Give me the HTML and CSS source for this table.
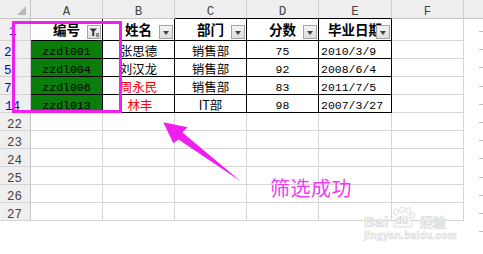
FILE: index.html
```html
<!DOCTYPE html>
<html lang="zh-CN">
<head>
<meta charset="utf-8">
<title>筛选成功</title>
<link rel="stylesheet" href="styles.css">
</head>
<body>
<div class="sheet">
  <div class="grid">
    <div class="corner"><svg class="tri" width="10" height="10" viewBox="0 0 10 10"><polygon points="0,9 9,0 9,9" fill="#b9b9b9"/></svg></div>
    <div class="ch">A</div>
    <div class="ch">B</div>
    <div class="ch tt">C</div>
    <div class="ch tt">D</div>
    <div class="ch tt">E</div>
    <div class="ch">F</div>

    <div class="rh r1 blue one">1</div>
    <div class="hd tb">编号<span class="fbtn"><svg width="12" height="12" viewBox="0 0 12 12"><polygon points="1.5,2.5 9,2.5 6.2,5.6 6.2,10 4.3,10 4.3,5.6" fill="#333"/><rect x="8" y="7.5" width="3" height="1" fill="#333"/><rect x="8" y="9.5" width="3" height="1" fill="#333"/></svg></span></div>
    <div class="hd tb">姓名<span class="fbtn"><i class="dn"></i></span></div>
    <div class="hd tb">部门<span class="fbtn"><i class="dn"></i></span></div>
    <div class="hd tb">分数<span class="fbtn"><i class="dn"></i></span></div>
    <div class="hd tb">毕业日期<span class="fbtn"><i class="dn"></i></span></div>
    <div class="c"></div>

    <div class="rh blue one">2</div>
    <div class="c tb code">zzdl001</div>
    <div class="c tb cjk">张思德</div>
    <div class="c tb cjk">销售部</div>
    <div class="c tb num">75</div>
    <div class="c tb date">2010/3/9</div>
    <div class="c"></div>

    <div class="rh blue one">5</div>
    <div class="c tb code">zzdl004</div>
    <div class="c tb cjk">刘汉龙</div>
    <div class="c tb cjk">销售部</div>
    <div class="c tb num">92</div>
    <div class="c tb date">2008/6/4</div>
    <div class="c"></div>

    <div class="rh blue one">7</div>
    <div class="c tb code">zzdl006</div>
    <div class="c tb cjk red">周永民</div>
    <div class="c tb cjk">销售部</div>
    <div class="c tb num">83</div>
    <div class="c tb date">2011/7/5</div>
    <div class="c"></div>

    <div class="rh blue">14</div>
    <div class="c tb code">zzdl013</div>
    <div class="c tb cjk red">&nbsp;林丰</div>
    <div class="c tb cjk">IT部</div>
    <div class="c tb num">98</div>
    <div class="c tb date">2007/3/27</div>
    <div class="c"></div>

    <div class="rh">22</div><div class="c"></div><div class="c"></div><div class="c"></div><div class="c"></div><div class="c"></div><div class="c"></div>
    <div class="rh">23</div><div class="c"></div><div class="c"></div><div class="c"></div><div class="c"></div><div class="c"></div><div class="c"></div>
    <div class="rh">24</div><div class="c"></div><div class="c"></div><div class="c"></div><div class="c"></div><div class="c"></div><div class="c"></div>
    <div class="rh">25</div><div class="c"></div><div class="c"></div><div class="c"></div><div class="c"></div><div class="c"></div><div class="c"></div>
    <div class="rh">26</div><div class="c"></div><div class="c"></div><div class="c"></div><div class="c"></div><div class="c"></div><div class="c"></div>
    <div class="rh">27</div><div class="c"></div><div class="c"></div><div class="c"></div><div class="c"></div><div class="c"></div><div class="c"></div>
  </div>
  <div class="edge">
    <div class="edge-head"></div>
    <div class="ticks"></div>
  </div>
</div>

<div class="hl-box"></div>
<svg class="arrow" width="483" height="254" viewBox="0 0 483 254">
  <polygon points="163.3,122.3 187.7,127.3 182.5,132.5 241,181.5 178.5,139.5 173.3,143.3" fill="#f01ff0"/>
</svg>
<div class="note">筛选成功</div>

<div class="wm">
  <div class="wm-top">
    <span class="wm-bai">Bai</span>
    <span class="wm-paw"><svg width="26" height="22" viewBox="0 0 26 22"><g fill="#fafafa" stroke="#d9d9d9" stroke-width="0.8"><ellipse cx="6" cy="5" rx="2.6" ry="3.2"/><ellipse cx="12" cy="2.8" rx="2.6" ry="2.6"/><ellipse cx="18.5" cy="3.5" rx="2.6" ry="3"/><ellipse cx="22.5" cy="8.5" rx="2.4" ry="2.8"/><path d="M4 20 C3 14 8 9 13 9 C18 9 23 14 22 20 Z"/></g></svg><span class="wm-du">du</span></span>
    <span class="wm-jy">经验</span>
  </div>
  <div class="wm-url">jingyan.baidu.com</div>
</div>
</body>
</html>
```
FILE: styles.css
```css
html, body {
  margin: 0;
  padding: 0;
}
body {
  width: 483px;
  height: 254px;
  overflow: hidden;
  background: #ffffff;
  position: relative;
  font-family: "Noto Sans CJK SC", "Liberation Sans", sans-serif;
}

.sheet {
  display: flex;
  align-items: flex-start;
}

.grid {
  display: grid;
  grid-template-columns: 31px 72px 72px 72px 72px 73px 72px;
  grid-template-rows: 19px 22px repeat(10, 18px);
}

.grid > div {
  box-sizing: border-box;
  border-right: 1px solid #d4d4d4;
  border-bottom: 1px solid #d4d4d4;
  position: relative;
  white-space: nowrap;
  line-height: 14px;
}

.corner {
  background: #efefef;
  border-right-color: #c4c4c4 !important;
  border-bottom-color: #c4c4c4 !important;
}
.tri {
  position: absolute;
  left: 17px;
  top: 6px;
}

.ch {
  background: #efefef;
  border-bottom-color: #c4c4c4 !important;
  border-right-color: #d0d0d0 !important;
  text-align: center;
  font-family: "Liberation Mono", monospace;
  font-size: 12.5px;
  color: #444444;
  padding-top: 5px;
}
.ch.tt {
  border-bottom-color: #000000 !important;
}

.rh {
  background: #efefef;
  border-right-color: #c4c4c4 !important;
  font-family: "Liberation Mono", monospace;
  font-size: 12.5px;
  color: #444444;
  padding-top: 4.5px;
  padding-left: 7px;
}
.rh.blue {
  color: #0000ee;
  padding-left: 5px;
}
.rh.one {
  padding-left: 4px;
}
.rh.r1 {
  padding-top: 6px;
  padding-left: 9px;
}

.tb {
  border-right-color: #000000 !important;
  border-bottom-color: #000000 !important;
}

.hd {
  text-align: center;
  font-weight: 700;
  font-size: 13.5px;
  color: #000000;
  padding-top: 2.5px;
}

.fbtn {
  position: absolute;
  right: 1px;
  bottom: 1px;
  width: 14px;
  height: 14px;
  box-sizing: border-box;
  border: 1px solid #a3a3a3;
  background: linear-gradient(#f3f3f3, #dedede);
  display: flex;
  align-items: center;
  justify-content: center;
}
.dn {
  width: 0;
  height: 0;
  border-left: 3.5px solid transparent;
  border-right: 3.5px solid transparent;
  border-top: 4px solid #444444;
  margin-top: 1px;
}

.c {
  color: #000000;
}
.code {
  background: #0a7d0a;
  text-align: center;
  font-family: "Liberation Mono", monospace;
  font-size: 11.5px;
  padding-top: 3.5px;
}
.cjk {
  text-align: center;
  font-size: 12.5px;
  padding-top: 2.5px;
}
.red {
  color: #ff0000;
}
.num {
  text-align: center;
  font-family: "Liberation Mono", monospace;
  font-size: 11.5px;
  padding-top: 3.5px;
}
.date {
  text-align: left;
  font-family: "Liberation Mono", monospace;
  font-size: 11.5px;
  padding-top: 3.5px;
  padding-left: 2px;
}

.edge {
  width: 20px;
  display: flex;
  flex-direction: column;
  align-items: flex-end;
}
.edge-head {
  width: 20px;
  height: 18px;
  background: #efefef;
  border-bottom: 1px solid #c4c4c4;
}
.ticks {
  margin-top: 12px;
  width: 5px;
  height: 203px;
  background: repeating-linear-gradient(to bottom, #bdbdbd 0, #bdbdbd 1px, transparent 1px, transparent 18.2px);
}

.hl-box {
  position: absolute;
  left: 12px;
  top: 21px;
  width: 110px;
  height: 92px;
  box-sizing: border-box;
  border: 3px solid #f01ff0;
}

.arrow {
  position: absolute;
  left: 0;
  top: 0;
}

.note {
  position: absolute;
  left: 270px;
  top: 176px;
  font-size: 20px;
  line-height: 24px;
  letter-spacing: 0.5px;
  color: #f23af2;
  white-space: nowrap;
}

.wm {
  position: absolute;
  left: 364px;
  top: 205px;
  display: flex;
  flex-direction: column;
  gap: 1px;
}
.wm-top {
  display: flex;
  align-items: flex-end;
  height: 24px;
}
.wm-bai {
  font-family: "Liberation Sans", sans-serif;
  font-weight: 700;
  font-size: 15px;
  line-height: 15px;
  color: #f8f8f8;
  -webkit-text-stroke: 0.7px #d6d6d6;
  letter-spacing: 0.5px;
}
.wm-paw {
  position: relative;
  width: 26px;
  height: 22px;
  margin-left: 1px;
}
.wm-paw svg {
  position: absolute;
  left: 0;
  top: 0;
}
.wm-du {
  position: absolute;
  left: 6px;
  top: 8px;
  font-family: "Liberation Sans", sans-serif;
  font-weight: 700;
  font-size: 10px;
  line-height: 12px;
  color: #dadada;
}
.wm-jy {
  font-size: 13px;
  line-height: 14px;
  font-weight: 700;
  color: #f8f8f8;
  -webkit-text-stroke: 0.6px #d6d6d6;
  margin-left: 4px;
}
.wm-url {
  font-family: "Liberation Sans", sans-serif;
  font-weight: 700;
  font-size: 10px;
  line-height: 11px;
  color: #f6f6f6;
  -webkit-text-stroke: 0.5px #d9d9d9;
  letter-spacing: 0.3px;
}
```
